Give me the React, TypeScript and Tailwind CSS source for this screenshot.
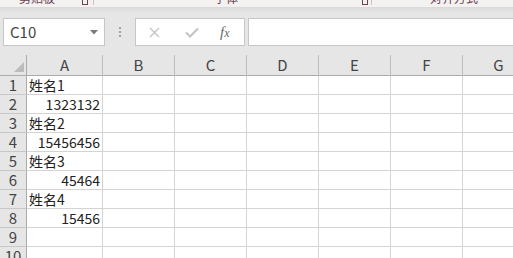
import React from 'react';

const cols = ['A', 'B', 'C', 'D', 'E', 'F', 'G'];

const rows: Array<{ n: number; a?: string; num?: boolean }> = [
  { n: 1, a: '姓名1' },
  { n: 2, a: '1323132', num: true },
  { n: 3, a: '姓名2' },
  { n: 4, a: '15456456', num: true },
  { n: 5, a: '姓名3' },
  { n: 6, a: '45464', num: true },
  { n: 7, a: '姓名4' },
  { n: 8, a: '15456', num: true },
  { n: 9 },
  { n: 10 },
];

const font = { fontFamily: '"Noto Sans CJK SC", "Noto Sans", sans-serif' };

export default function App() {
  return (
    <div className="w-[513px] h-[258px] overflow-hidden bg-white text-[#333]" style={font}>
      {/* bottom of the ribbon, cut off */}
      <div className="relative h-[7px] overflow-hidden bg-[#f3f2f1] text-[12px] leading-[14px] text-[#6b4452]">
        <div className="flex h-[14px] -mt-[9px]">
          <div className="w-[94px] flex items-end border-r border-[#c8c6c4]">
            <span className="ml-[19px]">剪贴板</span>
            <span className="ml-auto mr-[5px] w-[6px] h-[6px] border border-[#6b4452]" />
          </div>
          <div className="w-[278px] flex items-end border-r border-[#c8c6c4]">
            <span className="ml-[120px]">字体</span>
            <span className="ml-auto mr-[3px] w-[6px] h-[6px] border border-[#6b4452]" />
          </div>
          <div className="flex-1 flex items-end">
            <span className="ml-[58px]">对齐方式</span>
          </div>
        </div>
      </div>

      {/* formula bar */}
      <div className="h-[48px] bg-gradient-to-b from-[#d9d9d9] via-[#e6e6e6] via-[12%] to-[#e6e6e6] pt-[11px] flex items-start">
        <div className="ml-[3px] w-[102px] h-[28px] bg-white border border-[#c6c6c6] flex items-center">
          <span className="ml-[6px] text-[15px] text-[#444]">C10</span>
          <svg className="ml-auto mr-[6px]" width="8" height="5" viewBox="0 0 8 5">
            <path d="M0 0 H8 L4 4.5 Z" fill="#7a7a7a" />
          </svg>
        </div>
        <div className="w-[30px] h-[28px] flex flex-col items-center justify-center gap-[2px]">
          <span className="w-[2px] h-[2px] bg-[#a0a0a0]" />
          <span className="w-[2px] h-[2px] bg-[#a0a0a0]" />
          <span className="w-[2px] h-[2px] bg-[#a0a0a0]" />
        </div>
        <div className="w-[110px] h-[28px] bg-white border border-[#c6c6c6] flex items-center">
          <svg className="ml-[13px]" width="11" height="11" viewBox="0 0 11 11">
            <path d="M1 1 L10 10 M10 1 L1 10" stroke="#c2c2c2" strokeWidth="1.3" />
          </svg>
          <svg className="ml-[25px]" width="14" height="11" viewBox="0 0 14 11">
            <path d="M1 5.5 L5 9.5 L13 1.5" stroke="#c2c2c2" strokeWidth="2" fill="none" />
          </svg>
          <span
            className="ml-[21px] text-[15px] italic text-[#6a6a6a] leading-none"
            style={{ fontFamily: '"Liberation Serif", serif' }}
          >
            f<span className="text-[12px]">x</span>
          </span>
        </div>
        <div className="ml-[3px] flex-1 h-[28px] bg-white border border-[#c6c6c6] border-r-0" />
      </div>

      {/* grid */}
      <div className="grid grid-cols-[27px_76px_72px_72px_72px_72px_72px_72px] text-[14px] text-[#222]">
        <div className="h-[21px] bg-[#e6e6e6] border-r border-b border-[#ababab] relative">
          <svg className="absolute right-[2px] bottom-[3px]" width="10" height="10" viewBox="0 0 10 10">
            <path d="M10 0 V10 H0 Z" fill="#bcbcbc" />
          </svg>
        </div>
        {cols.map((c) => (
          <div
            key={c}
            className="h-[21px] bg-[#e6e6e6] border-r border-b border-r-[#bdbdbd] border-b-[#ababab] flex items-center justify-center text-[#444] text-[15px]"
          >
            {c}
          </div>
        ))}

        {rows.map((r) => (
          <React.Fragment key={r.n}>
            <div className="h-[19px] bg-[#e6e6e6] border-r border-b border-r-[#ababab] border-b-[#c8c8c8] flex items-center justify-center text-[#444] text-[15px]">
              {r.n}
            </div>
            <div
              className={`h-[19px] border-r border-b border-[#d4d4d4] flex items-center whitespace-nowrap ${
                r.num ? 'justify-end pr-[2px]' : 'pl-[2px]'
              }`}
            >
              {r.a}
            </div>
            {cols.slice(1).map((c) => (
              <div key={c} className="h-[19px] border-r border-b border-[#d4d4d4]" />
            ))}
          </React.Fragment>
        ))}
      </div>
    </div>
  );
}
